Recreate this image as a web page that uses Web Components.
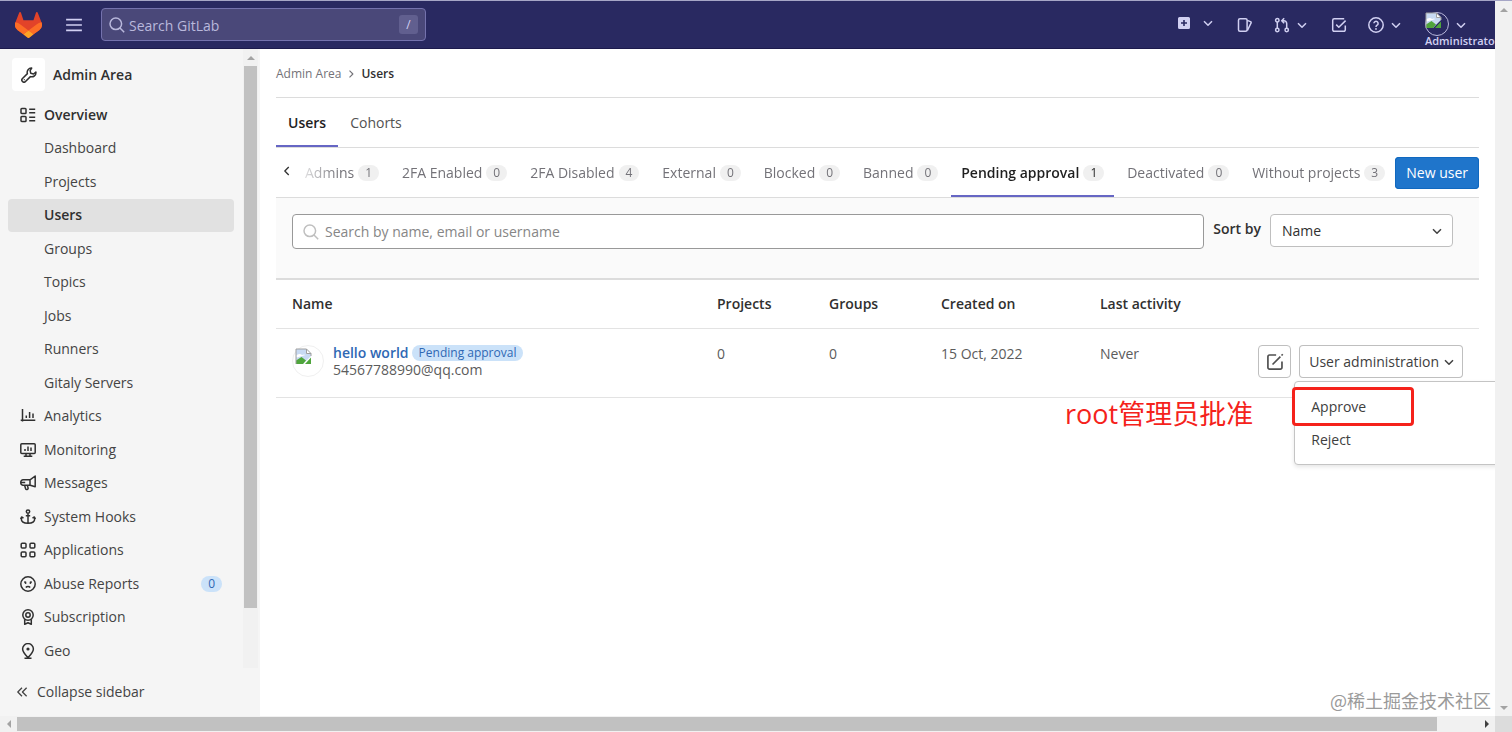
<!DOCTYPE html>
<html lang="en">
<head>
<meta charset="utf-8">
<meta name="viewport" content="width=device-width, initial-scale=1">
<title>Users · Admin Area · GitLab</title>
<style>
    html, body {
        margin: 0;
        height: 100%;
    }
    body {
        font: 14px/20px "Open Sans", "Noto Sans CJK SC", sans-serif;
        color: #303030;
        background: #fff;
    }
</style>
</head>
<body>
<admin-page></admin-page>

<script>
const ICONS = {
    menu: '<path d="M1 3.2h14M1 8h14M1 12.8h14"/>',
    search: '<circle cx="6.8" cy="6.8" r="5.8"/><path d="M11 11L15.2 15.2"/>',
    plus: '<path fill="currentColor" stroke="none" fill-rule="evenodd" d="M3.500 2h9A1.500 1.500 0 0 1 14 3.500v9a1.500 1.500 0 0 1-1.500 1.500h-9A1.500 1.500 0 0 1 2 12.500v-9A1.500 1.500 0 0 1 3.500 2zM7.200 5v2.200H5v1.600h2.200V11h1.600V8.800H11V7.200H8.800V5z"/>',
    chevron: '<path d="M4 6.200l4 4 4-4"/>',
    chevronLeft: '<path d="M10 3.500L5.500 8l4.500 4.500"/>',
    chevronRight: '<path d="M6 3.500L10.500 8 6 12.500"/>',
    issues: '<rect x="1.500" y="1.700" width="8.600" height="12.600" rx="1.500"/><path d="M10.200 3.400l3.300 1.200a1 1 0 0 1 .6 1.300l-3.700 7.600"/>',
    merge: '<circle cx="3.300" cy="3.200" r="1.700"/><circle cx="3.300" cy="13" r="1.700"/><circle cx="12.700" cy="13" r="1.700"/><path d="M3.300 5v6.200M12.700 11.200V6.500a2.800 2.800 0 0 0-2.800-2.800H8.200M10.200 1.200L7.700 3.700l2.500 2.500"/>',
    todo: '<path d="M14.300 8.500v4.300a1.500 1.500 0 0 1-1.500 1.500H3.200a1.500 1.500 0 0 1-1.500-1.500V3.200a1.500 1.500 0 0 1 1.500-1.500h10M5.200 7.600l2.600 2.600 6.800-6.600"/>',
    help: '<circle cx="8" cy="8" r="7.200"/><path d="M5.900 6.300a2.100 2.100 0 1 1 3.200 1.900c-.8.500-1.100.9-1.100 1.700"/><circle cx="8" cy="11.900" r=".9" fill="currentColor" stroke="none"/>',
    wrench: '<path d="M10.700 1.100a4.200 4.200 0 0 0-4.300 5.500L1.500 11.500a2 2 0 1 0 3 3l4.900-4.900a4.200 4.200 0 0 0 5.500-4.600l-2.400 2-2.700-.700-.700-2.700z"/><circle cx="3.300" cy="12.700" r=".6" fill="currentColor" stroke="none"/>',
    overview: '<rect x="1" y="1.500" width="5" height="5" rx=".8"/><rect x="1" y="9.500" width="5" height="5" rx=".8"/><path d="M9.200 2.200h6M9.200 5.800h6M9.200 10.200h6M9.200 13.800h6"/>',
    analytics: '<path d="M2.500 1v12.500M.7 12.200H15.300M6.300 10V7.500M9.600 10V4M13 10V5.500"/>',
    monitoring: '<rect x=".8" y="1.700" width="14.400" height="9.800" rx="1"/><path d="M5 9V7M8 9V4.500M11 9V5.500M6 11.700V14M10 11.700V14M3.700 14.300h8.600"/>',
    messages: '<path d="M15.200 1v10.800l-5-1.600H3a2.200 2.200 0 0 1-2.200-2.200v-1A2.200 2.200 0 0 1 3 4.800h7zM10 4.600v5.600M.8 7.500h4.400M4.600 10.300l1 3.400a1.300 1.300 0 0 0 2.500-.700l-.800-2.700"/>',
    hooks: '<circle cx="8" cy="2.600" r="1.700"/><path d="M8 4.400v9.900M5.800 6.700h4.400M1.300 8.200v1.600C1.300 12.600 3.500 14.300 8 14.300s6.700-1.700 6.700-4.500V8.200M.6 10l1-2 1.900 1.200M15.400 10l-1-2-1.900 1.200"/>',
    applications: '<rect x="1.200" y="1.200" width="4.800" height="4.800" rx="1"/><rect x="10" y="1.200" width="4.800" height="4.800" rx="1"/><rect x="1.200" y="10" width="4.800" height="4.800" rx="1"/><rect x="10" y="10" width="4.800" height="4.800" rx="1"/>',
    abuse: '<circle cx="8" cy="8" r="7.200"/><path d="M5.800 11.500c1.100-1.400 3.300-1.400 4.400 0M4.300 5.700l1.700.8M11.700 5.700l-1.700.8"/><circle cx="5.600" cy="7" r=".9" fill="currentColor" stroke="none"/><circle cx="10.400" cy="7" r=".9" fill="currentColor" stroke="none"/>',
    subscription: '<circle cx="8" cy="6" r="5.200"/><circle cx="8" cy="6" r="2.200"/><path d="M4.700 10.300v5l3.300-1.500 3.300 1.500v-5"/>',
    geo: '<path d="M8 14.700C5 11.500 2.600 9 2.600 6a5.400 5.400 0 0 1 10.800 0c0 3-2.400 5.500-5.400 8.700zM4.500 15.200h7"/><circle cx="8" cy="6" r="1.600" fill="currentColor" stroke="none"/>',
    collapse: '<path d="M8 3.200L3.200 8 8 12.800M13.300 3.200L8.500 8l4.800 4.800"/>',
    pencil: '<path d="M9 1.800H3.200a1.500 1.500 0 0 0-1.500 1.500v9.500a1.500 1.500 0 0 0 1.500 1.500h9.500a1.500 1.500 0 0 0 1.500-1.500V7.500M5.800 10.200l7-7M13.800 2.200l1.100-1.100"/>'
}

class GlIcon extends HTMLElement {

    static get observedAttributes() {
        return ['name', 'size']
    }

    constructor() {
        super()
        this.root = this.attachShadow({ mode: 'open' })
    }

    attributeChangedCallback() {
        this._updateRendering()
    }

    _updateRendering() {
        const size = this.getAttribute('size') || 16
        this.root.innerHTML = `
            <style>
                :host { display: block; flex: none; width: ${size}px; height: ${size}px; }
                svg { display: block; }
            </style>
            <svg width="${size}" height="${size}" viewBox="0 0 16 16" fill="none" stroke="currentColor"
                 stroke-width="1.500" stroke-linejoin="round" aria-hidden="true">${ICONS[this.getAttribute('name')] || ''}</svg>`
    }
}

class CountBadge extends HTMLElement {

    constructor() {
        super()
        this.attachShadow({ mode: 'open' }).innerHTML = `
            <style>
                :host {
                    display: inline-block;
                    box-sizing: border-box;
                    padding: 0 7px;
                    border-radius: 8px;
                    font-size: 12px;
                    line-height: 16px;
                    background: #f0f0f0;
                }
                :host([variant=info]) { background: #cbe2f9; color: #2f68b4; }
            </style>
            <slot></slot>`
    }
}

// Placeholder glyph for avatars without a picture
class UserAvatar extends HTMLElement {

    constructor() {
        super()
        this.attachShadow({ mode: 'open' }).innerHTML = `
            <style>
                :host {
                    display: block;
                    flex: none;
                    box-sizing: border-box;
                    width: var(--avatar-size, 32px);
                    height: var(--avatar-size, 32px);
                    border: 1px solid var(--avatar-border, #f0f0f0);
                    border-radius: 50%;
                }
                svg { display: block; margin: var(--avatar-inset, 2px); }
            </style>
            <svg width="17" height="17" viewBox="0 0 17 17" aria-hidden="true">
                <path d="M1 1h10.500L16 5.500V8L8 16H1z" fill="#c8daf3"/>
                <path d="M2 9.500a3 2 0 0 1 5-2.500 3 2.500 0 0 1 3.500 0" fill="#fff"/>
                <path d="M1 16v-3.500L6.500 9l4.500 3.500L8 16z" fill="#4fa53c"/>
                <path d="M16 9.500V16h-6z" fill="#4fa53c"/>
                <path d="M1 16V1h10.500M16 5.500V8" fill="none" stroke="#a0a0a0"/>
                <path d="M11.500 1v4.500H16z" fill="#fff" stroke="#a0a0a0"/>
            </svg>`
    }
}

class ScrollTrack extends HTMLElement {

    constructor() {
        super()
        this.attachShadow({ mode: 'open' }).innerHTML = `
            <style>
                :host { display: flex; background: #f1f1f1; overflow: hidden; }
                :host([axis=y]) { flex-direction: column; }
                i { flex: none; width: 17px; height: 100%; display: grid; place-items: center; }
                :host([axis=y]) i { width: 100%; height: 17px; }
                i::before { content: ""; border: 4px solid transparent; }
                :host([axis=x]) .start::before { border-left: 0; border-right-color: #a3a3a3; }
                :host([axis=x]) .end::before { border-right: 0; border-left-color: #404040; }
                :host([axis=y]) .start::before { border-top: 0; border-bottom-color: #a3a3a3; }
                :host([axis=y]) .end::before { border-bottom: 0; border-top-color: #a3a3a3; }
                :host([no-end]) .end { display: none; }
                .rail { flex: 1; display: flex; flex-direction: inherit; }
                .thumb { flex: 0 0 var(--thumb, 0%); background: #c1c1c1; margin: 1px 0; }
                :host([axis=y]) .thumb { margin: 0 1px; }
            </style>
            <i class="start"></i><div class="rail"><div class="thumb"></div></div><i class="end"></i>`
    }
}

class TopBar extends HTMLElement {

    constructor() {
        super()
        this.root = this.attachShadow({ mode: 'open' })
    }

    connectedCallback() {
        this._updateRendering()
    }

    _updateRendering() {
        this.root.innerHTML = `
            <style>
                :host {
                    display: flex;
                    align-items: center;
                    box-sizing: border-box;
                    height: 48px;
                    padding: 0 26px 0 15px;
                    overflow: hidden;
                    background: #292961;
                    color: #d1d0f2;
                    border-bottom: 1px solid #1c1a4c;
                }
                button, a { border: 0; padding: 0; background: none; color: inherit; font: inherit; text-decoration: none; }
                .logo svg { display: block; }
                .burger { margin: 0 18px 0 23px; }
                .search {
                    display: flex;
                    align-items: center;
                    gap: 4px;
                    box-sizing: border-box;
                    width: 325px;
                    height: 33px;
                    padding: 0 7px;
                    border: 1px solid #7472ad;
                    border-radius: 4px;
                    background: #4a4879;
                    color: #b9b8dc;
                }
                input { flex: 1; min-width: 0; border: 0; padding: 2px 0 0; outline: 0; background: none; color: inherit; font: inherit; }
                input::placeholder { color: inherit; opacity: 1; }
                kbd {
                    width: 19px;
                    border-radius: 3px;
                    background: #615f8f;
                    color: #d1d0f2;
                    font: 12px/19px "Open Sans", sans-serif;
                    text-align: center;
                }
                nav { margin-left: auto; display: flex; align-items: center; gap: 21px; }
                nav > * { display: flex; align-items: center; gap: 4px; }
                .add { gap: 8px; padding-bottom: 3px; }
                .user { --avatar-size: 24px; --avatar-border: #b9b8dc; --avatar-inset: -1px; }
                .face { width: 24px; height: 34px; padding-top: 9px; font-size: 11px; line-height: 10px; font-weight: 600; text-align: left; }
                .face span { display: block; }
            </style>
            <a class="logo" href="#" aria-label="GitLab">
                <svg width="27" height="26" viewBox="0 0 25 24">
                    <path fill="#e24329" d="m24.507 9.500-.034-.09L21.082.562a.896.896 0 0 0-1.694.091l-2.290 7.010H7.825L5.535.653a.898.898 0 0 0-1.694-.09L.451 9.411.416 9.500a6.297 6.297 0 0 0 2.090 7.278l.012.010.030.022 5.160 3.867 2.560 1.935 1.554 1.176a1.051 1.051 0 0 0 1.268 0l1.555-1.176 2.560-1.935 5.197-3.890.014-.010A6.297 6.297 0 0 0 24.507 9.500Z"/>
                    <path fill="#fc6d26" d="m24.507 9.500-.034-.09a11.440 11.440 0 0 0-4.560 2.051l-7.447 5.632 4.742 3.584 5.197-3.890.014-.010A6.297 6.297 0 0 0 24.507 9.500Z"/>
                    <path fill="#fca326" d="m7.707 20.677 2.560 1.935 1.555 1.176a1.051 1.051 0 0 0 1.268 0l1.555-1.176 2.560-1.935-4.743-3.584-4.755 3.584Z"/>
                    <path fill="#fc6d26" d="M5.010 11.461a11.430 11.430 0 0 0-4.560-2.050L.416 9.500a6.297 6.297 0 0 0 2.090 7.278l.012.010.030.022 5.160 3.867 4.745-3.584-7.444-5.632Z"/>
                </svg>
            </a>
            <button class="burger" aria-label="Menu"><gl-icon name="menu" size="18"></gl-icon></button>
            <label class="search">
                <gl-icon name="search"></gl-icon>
                <input type="text" placeholder="Search GitLab" aria-label="Search GitLab">
                <kbd>/</kbd>
            </label>
            <nav>
                <button class="add" aria-label="Create new"><gl-icon name="plus"></gl-icon><gl-icon name="chevron"></gl-icon></button>
                <a href="#" aria-label="Issues"><gl-icon name="issues"></gl-icon></a>
                <button aria-label="Merge requests"><gl-icon name="merge"></gl-icon><gl-icon name="chevron"></gl-icon></button>
                <a href="#" aria-label="To-Do List"><gl-icon name="todo"></gl-icon></a>
                <button aria-label="Help"><gl-icon name="help"></gl-icon><gl-icon name="chevron"></gl-icon></button>
                <button class="user"><div class="face"><user-avatar></user-avatar><span>Administrator</span></div><gl-icon name="chevron"></gl-icon></button>
            </nav>`
    }
}

class SidebarItem extends HTMLElement {

    static get observedAttributes() {
        return ['icon', 'count']
    }

    constructor() {
        super()
        this.root = this.attachShadow({ mode: 'open' })
    }

    attributeChangedCallback() {
        this._updateRendering()
    }

    connectedCallback() {
        this._updateRendering()
    }

    _updateRendering() {
        const icon = this.getAttribute('icon')
        const count = this.getAttribute('count')
        this.root.innerHTML = `
            <style>
                :host { display: block; }
                a {
                    display: flex;
                    align-items: center;
                    gap: 8px;
                    height: 33px;
                    padding: 0 12px;
                    border-radius: 4px;
                    color: inherit;
                    text-decoration: none;
                }
                .text { flex: 1; }
                :host([sub]) a { padding-left: 36px; }
                :host([active]) a { background: #e1e1e1; }
                :host([active]) a, :host([strong]) a { font-weight: 600; color: #303030; }
                gl-icon { color: #303030; }
            </style>
            <a href="#">
                ${icon ? `<gl-icon name="${icon}"></gl-icon>` : ''}
                <span class="text"><slot></slot></span>
                ${count ? `<count-badge variant="info">${count}</count-badge>` : ''}
            </a>`
    }
}

class AdminSidebar extends HTMLElement {

    constructor() {
        super()
        this.root = this.attachShadow({ mode: 'open' })
    }

    connectedCallback() {
        this._updateRendering()
    }

    _updateRendering() {
        this.root.innerHTML = `
            <style>
                :host { display: flex; flex-direction: column; background: #f5f5f5; color: #444; min-height: 0; }
                .scroll { flex: 1; display: grid; grid-template-columns: 1fr 15px; padding-right: 2px; min-height: 0; }
                scroll-track { --thumb: 90%; background: #f1f1f1; }
                .menu { display: flex; flex-direction: column; padding: 9px 9px 1px 8px; min-height: 0; }
                .context { display: flex; align-items: center; gap: 8px; padding: 0 4px; font-weight: 600; color: #303030; text-decoration: none; }
                .tile { display: grid; place-items: center; width: 33px; height: 33px; border-radius: 4px; background: #fff; }
                .list { flex: 1; display: flex; flex-direction: column; justify-content: space-between; padding-top: 7px; }
                .collapse {
                    display: flex;
                    align-items: center;
                    gap: 8px;
                    height: 48px;
                    padding: 0 15px;
                    border: 0;
                    background: none;
                    color: inherit;
                    font: inherit;
                }
            </style>
            <div class="scroll">
                <nav class="menu" aria-label="Admin">
                    <a class="context" href="#"><span class="tile"><gl-icon name="wrench"></gl-icon></span>Admin Area</a>
                    <div class="list">
                        <sidebar-item icon="overview" strong>Overview</sidebar-item>
                        <sidebar-item sub>Dashboard</sidebar-item>
                        <sidebar-item sub>Projects</sidebar-item>
                        <sidebar-item sub active>Users</sidebar-item>
                        <sidebar-item sub>Groups</sidebar-item>
                        <sidebar-item sub>Topics</sidebar-item>
                        <sidebar-item sub>Jobs</sidebar-item>
                        <sidebar-item sub>Runners</sidebar-item>
                        <sidebar-item sub>Gitaly Servers</sidebar-item>
                        <sidebar-item icon="analytics">Analytics</sidebar-item>
                        <sidebar-item icon="monitoring">Monitoring</sidebar-item>
                        <sidebar-item icon="messages">Messages</sidebar-item>
                        <sidebar-item icon="hooks">System Hooks</sidebar-item>
                        <sidebar-item icon="applications">Applications</sidebar-item>
                        <sidebar-item icon="abuse" count="0">Abuse Reports</sidebar-item>
                        <sidebar-item icon="subscription">Subscription</sidebar-item>
                        <sidebar-item icon="geo">Geo</sidebar-item>
                    </div>
                </nav>
                <scroll-track axis="y" no-end></scroll-track>
            </div>
            <button class="collapse"><gl-icon name="collapse" size="14"></gl-icon>Collapse sidebar</button>`
    }
}

class TabItem extends HTMLElement {

    static get observedAttributes() {
        return ['count']
    }

    constructor() {
        super()
        this.root = this.attachShadow({ mode: 'open' })
    }

    attributeChangedCallback() {
        this._updateRendering()
    }

    connectedCallback() {
        this._updateRendering()
    }

    _updateRendering() {
        const count = this.getAttribute('count')
        this.root.innerHTML = `
            <style>
                :host { display: block; flex: none; }
                a {
                    display: flex;
                    align-items: center;
                    gap: 4px;
                    box-sizing: border-box;
                    height: 49px;
                    padding: 2px var(--tab-padding, 12px) 0;
                    border-bottom: 2px solid transparent;
                    color: #737278;
                    white-space: nowrap;
                    text-decoration: none;
                }
                :host([dark]) a { color: #525252; }
                :host([active]) a { border-color: #6666c4; color: #1f1f1f; font-weight: 600; }
                count-badge { font-weight: 400; }
            </style>
            <a href="#"><slot></slot>${count ? `<count-badge>${count}</count-badge>` : ''}</a>`
    }
}

class UserFilters extends HTMLElement {

    constructor() {
        super()
        this.root = this.attachShadow({ mode: 'open' })
    }

    connectedCallback() {
        this._updateRendering()
    }

    _updateRendering() {
        this.root.innerHTML = `
            <style>
                :host { display: block; }
                .tabs { display: flex; border-bottom: 1px solid #dcdcdc; }
                .states { display: flex; align-items: center; border-bottom: 1px solid #dcdcdc; }
                .states button, .states .new { flex: none; border: 0; font: inherit; }
                .prev { padding: 0 0 4px 4px; background: none; color: #303030; }
                .strip {
                    --tab-padding: 10px;
                    flex: 1;
                    min-width: 0;
                    display: flex;
                    justify-content: space-between;
                    overflow: hidden;
                    margin-left: 1px;
                    mask-image: linear-gradient(to right, transparent, #000 44px);
                }
                .new { padding: 6px 11px; border-radius: 4px; background: #1f75cb; color: #fff; text-decoration: none; box-shadow: inset 0 0 0 1px #1068bf; }
                form {
                    display: flex;
                    gap: 9px;
                    padding: 16px 26px 29px 16px;
                    background: #fafafa;
                    border-bottom: 2px solid #dcdcdc;
                }
                .search {
                    flex: 1;
                    display: flex;
                    align-items: center;
                    gap: 6px;
                    padding: 0 10px;
                    border: 1px solid #999;
                    border-radius: 4px;
                    background: #fff;
                    color: #bfbfbf;
                }
                input { flex: 1; height: 33px; border: 0; padding: 0; outline: 0; background: none; color: #303030; font: inherit; }
                input::placeholder { color: #868686; opacity: 1; }
                .label { padding-top: 5px; font-weight: 600; }
                .select { display: grid; align-items: center; align-self: start; width: 183px; color: #404040; }
                select, .select gl-icon { grid-area: 1 / 1; }
                select {
                    appearance: none;
                    height: 33px;
                    border: 1px solid #bfbfbf;
                    border-radius: 4px;
                    padding: 0 11px;
                    background: #fff;
                    color: #303030;
                    font: inherit;
                }
                .select gl-icon { justify-self: end; margin-right: 8px; pointer-events: none; }
            </style>
            <nav class="tabs" aria-label="Sections">
                <tab-item active>Users</tab-item>
                <tab-item dark>Cohorts</tab-item>
            </nav>
            <div class="states">
                <button class="prev" aria-label="Previous tabs"><gl-icon name="chevronLeft" size="14"></gl-icon></button>
                <nav class="strip" aria-label="User state">
                    <tab-item count="1">Admins</tab-item>
                    <tab-item count="0">2FA Enabled</tab-item>
                    <tab-item count="4">2FA Disabled</tab-item>
                    <tab-item count="0">External</tab-item>
                    <tab-item count="0">Blocked</tab-item>
                    <tab-item count="0">Banned</tab-item>
                    <tab-item count="1" active>Pending approval</tab-item>
                    <tab-item count="0">Deactivated</tab-item>
                    <tab-item count="3">Without projects</tab-item>
                </nav>
                <a class="new" href="#">New user</a>
            </div>
            <form>
                <label class="search">
                    <gl-icon name="search"></gl-icon>
                    <input type="text" placeholder="Search by name, email or username" aria-label="Search users">
                </label>
                <label class="label" for="sort">Sort by</label>
                <div class="select">
                    <select id="sort"><option>Name</option></select>
                    <gl-icon name="chevron"></gl-icon>
                </div>
            </form>`
    }
}

class ActionMenu extends HTMLElement {

    constructor() {
        super()
        this.root = this.attachShadow({ mode: 'open' })
    }

    connectedCallback() {
        this._updateRendering()
    }

    _updateRendering() {
        this.root.innerHTML = `
            <style>
                :host { display: block; position: relative; }
                button { border: 0; background: none; color: inherit; font: inherit; white-space: nowrap; text-align: left; }
                .toggle {
                    display: flex;
                    align-items: center;
                    gap: 2px;
                    height: 33px;
                    padding: 0 6px 0 10px;
                    border-radius: 4px;
                    background: #fff;
                    box-shadow: inset 0 0 0 1px #bfbfbf;
                }
                .menu {
                    position: absolute;
                    top: 36px;
                    left: -5px;
                    box-sizing: border-box;
                    width: 240px;
                    height: 84px;
                    padding: 8px 0;
                    border: 1px solid #c4c4c4;
                    border-radius: 4px;
                    background: #fff;
                    box-shadow: 0 2px 4px rgba(0, 0, 0, .1);
                }
                .menu button { display: block; width: 100%; height: 33px; padding: 0 16px; }
                .mark {
                    position: absolute;
                    top: 5px;
                    left: -3px;
                    box-sizing: border-box;
                    width: 122px;
                    height: 39px;
                    border: 3px solid #f5221b;
                    border-radius: 4px;
                    pointer-events: none;
                }
                .note {
                    position: absolute;
                    top: 12px;
                    right: 280px;
                    color: #f5221b;
                    font-size: 27px;
                    line-height: 40px;
                    white-space: nowrap;
                }
            </style>
            <button class="toggle" aria-haspopup="true">User administration<gl-icon name="chevron"></gl-icon></button>
            <div class="menu">
                <button>Approve</button>
                <button>Reject</button>
                <div class="mark"></div>
                <div class="note">root管理员批准</div>
            </div>`
    }
}

class UserTable extends HTMLElement {

    constructor() {
        super()
        this.root = this.attachShadow({ mode: 'open' })
    }

    connectedCallback() {
        this._updateRendering()
    }

    _updateRendering() {
        this.root.innerHTML = `
            <style>
                :host { display: block; }
                table { width: 100%; table-layout: fixed; border-collapse: collapse; }
                th, td { padding: 15px 16px; border-bottom: 1px solid #e3e3e3; text-align: left; vertical-align: top; }
                th { padding: 14px 16px; font-weight: 600; }
                td { color: #5c5c5c; }
                .short { width: 80px; }
                .date { width: 127px; }
                .last { width: 127px; }
                .actions { width: 204px; }
                .user { display: flex; gap: 9px; height: 37px; padding-top: 1px; }
                .line { display: flex; align-items: center; gap: 3px; line-height: 16px; }
                .line a { color: #2f68b4; font-weight: 600; text-decoration: none; }
                .mail { line-height: 18px; }
                .buttons { display: flex; justify-content: flex-end; gap: 8px; padding-top: 1px; color: #404040; }
                .edit {
                    flex: none;
                    display: grid;
                    place-items: center;
                    width: 33px;
                    height: 33px;
                    border: 1px solid #bfbfbf;
                    border-radius: 4px;
                    padding: 0;
                    background: #fff;
                    color: #505050;
                }
            </style>
            <table>
                <thead>
                    <tr>
                        <th>Name</th>
                        <th class="short">Projects</th>
                        <th class="short">Groups</th>
                        <th class="date">Created on</th>
                        <th class="last">Last activity</th>
                        <th class="actions"></th>
                    </tr>
                </thead>
                <tbody>
                    <tr>
                        <td>
                            <div class="user">
                                <user-avatar></user-avatar>
                                <div>
                                    <div class="line"><a href="#">hello world</a><count-badge variant="info">Pending approval</count-badge></div>
                                    <div class="mail">54567788990@qq.com</div>
                                </div>
                            </div>
                        </td>
                        <td>0</td>
                        <td>0</td>
                        <td>15 Oct, 2022</td>
                        <td>Never</td>
                        <td>
                            <div class="buttons">
                                <button class="edit" aria-label="Edit"><gl-icon name="pencil" size="18"></gl-icon></button>
                                <action-menu></action-menu>
                            </div>
                        </td>
                    </tr>
                </tbody>
            </table>`
    }
}

class AdminPage extends HTMLElement {

    constructor() {
        super()
        this.root = this.attachShadow({ mode: 'open' })
    }

    connectedCallback() {
        this._updateRendering()
    }

    _updateRendering() {
        this.root.innerHTML = `
            <style>
                :host {
                    display: grid;
                    grid-template: minmax(0, 1fr) 16px / minmax(0, 1fr) 17px;
                    box-sizing: border-box;
                    height: 100vh;
                    border-top: 1px solid #a6a6c6;
                }
                .view { display: grid; grid-template: auto minmax(0, 1fr) / 260px minmax(0, 1fr); overflow: hidden; }
                top-bar { grid-column: 1 / -1; }
                main { display: flex; flex-direction: column; padding: 0 16px; overflow: hidden; }
                .crumbs {
                    display: flex;
                    align-items: center;
                    gap: 4px;
                    height: 46px;
                    padding-top: 2px;
                    border-bottom: 1px solid #dcdcdc;
                    font-size: 12px;
                    color: #737278;
                }
                .crumbs a { color: inherit; text-decoration: none; }
                .crumbs a:last-child { color: #303030; font-weight: 600; }
                .credit {
                    margin: auto -12px 2px 0;
                    text-align: right;
                    font: 18px/28px "Noto Sans CJK SC", sans-serif;
                    color: #9a9a9a;
                }
                .across { --thumb: calc(100% - 41px); }
                .corner { background: #dcdcdc; }
            </style>
            <div class="view">
                <top-bar></top-bar>
                <admin-sidebar></admin-sidebar>
                <main>
                    <nav class="crumbs" aria-label="Breadcrumb"><a href="#">Admin Area</a><gl-icon name="chevronRight" size="12"></gl-icon><a href="#">Users</a></nav>
                    <user-filters></user-filters>
                    <user-table></user-table>
                    <div class="credit">@稀土掘金技术社区</div>
                </main>
            </div>
            <scroll-track axis="y"></scroll-track>
            <scroll-track class="across" axis="x"></scroll-track>
            <div class="corner"></div>`
    }
}

customElements.define('gl-icon', GlIcon)
customElements.define('count-badge', CountBadge)
customElements.define('user-avatar', UserAvatar)
customElements.define('scroll-track', ScrollTrack)
customElements.define('top-bar', TopBar)
customElements.define('sidebar-item', SidebarItem)
customElements.define('admin-sidebar', AdminSidebar)
customElements.define('tab-item', TabItem)
customElements.define('user-filters', UserFilters)
customElements.define('action-menu', ActionMenu)
customElements.define('user-table', UserTable)
customElements.define('admin-page', AdminPage)
</script>
</body>
</html>
